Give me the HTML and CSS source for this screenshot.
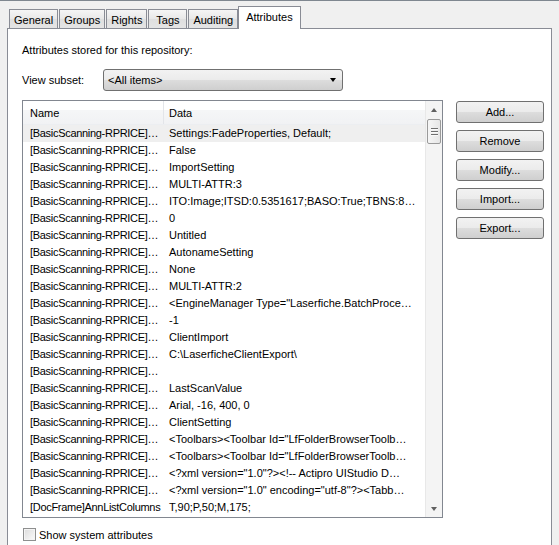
FILE: index.html
```html
<!DOCTYPE html>
<html lang="en">
<head>
    <meta charset="UTF-8">
    <title>Repository Properties - Attributes</title>
    <link rel="stylesheet" href="styles.css">
</head>
<body>
    <div class="dialog">
        <div class="tabs">
            <div class="tab">General</div>
            <div class="tab">Groups</div>
            <div class="tab">Rights</div>
            <div class="tab tab-tags">Tags</div>
            <div class="tab">Auditing</div>
            <div class="tab selected">Attributes</div>
        </div>
        <div class="panel">
            <div class="intro">Attributes stored for this repository:</div>
            <div class="subset-row">
                <span class="subset-label">View subset:</span>
                <div class="combo">
                    <span>&lt;All items&gt;</span>
                    <span class="combo-arrow"></span>
                </div>
            </div>
            <div class="main-row">
                <div class="listbox">
                    <div class="list-main">
                        <div class="list-header">
                            <div class="col-name">Name</div>
                            <div class="col-data">Data</div>
                        </div>
                        <div class="row selected-row"><div class="col-name">[BasicScanning-RPRICE]…</div><div class="col-data">Settings:FadeProperties, Default;</div></div>
                        <div class="row"><div class="col-name">[BasicScanning-RPRICE]…</div><div class="col-data">False</div></div>
                        <div class="row"><div class="col-name">[BasicScanning-RPRICE]…</div><div class="col-data">ImportSetting</div></div>
                        <div class="row"><div class="col-name">[BasicScanning-RPRICE]…</div><div class="col-data">MULTI-ATTR:3</div></div>
                        <div class="row"><div class="col-name">[BasicScanning-RPRICE]…</div><div class="col-data">ITO:Image;ITSD:0.5351617;BASO:True;TBNS:8…</div></div>
                        <div class="row"><div class="col-name">[BasicScanning-RPRICE]…</div><div class="col-data">0</div></div>
                        <div class="row"><div class="col-name">[BasicScanning-RPRICE]…</div><div class="col-data">Untitled</div></div>
                        <div class="row"><div class="col-name">[BasicScanning-RPRICE]…</div><div class="col-data">AutonameSetting</div></div>
                        <div class="row"><div class="col-name">[BasicScanning-RPRICE]…</div><div class="col-data">None</div></div>
                        <div class="row"><div class="col-name">[BasicScanning-RPRICE]…</div><div class="col-data">MULTI-ATTR:2</div></div>
                        <div class="row"><div class="col-name">[BasicScanning-RPRICE]…</div><div class="col-data">&lt;EngineManager Type="Laserfiche.BatchProce…</div></div>
                        <div class="row"><div class="col-name">[BasicScanning-RPRICE]…</div><div class="col-data">-1</div></div>
                        <div class="row"><div class="col-name">[BasicScanning-RPRICE]…</div><div class="col-data">ClientImport</div></div>
                        <div class="row"><div class="col-name">[BasicScanning-RPRICE]…</div><div class="col-data">C:\LaserficheClientExport\</div></div>
                        <div class="row"><div class="col-name">[BasicScanning-RPRICE]…</div><div class="col-data"></div></div>
                        <div class="row"><div class="col-name">[BasicScanning-RPRICE]…</div><div class="col-data">LastScanValue</div></div>
                        <div class="row"><div class="col-name">[BasicScanning-RPRICE]…</div><div class="col-data">Arial, -16, 400, 0</div></div>
                        <div class="row"><div class="col-name">[BasicScanning-RPRICE]…</div><div class="col-data">ClientSetting</div></div>
                        <div class="row"><div class="col-name">[BasicScanning-RPRICE]…</div><div class="col-data">&lt;Toolbars&gt;&lt;Toolbar Id="LfFolderBrowserToolb…</div></div>
                        <div class="row"><div class="col-name">[BasicScanning-RPRICE]…</div><div class="col-data">&lt;Toolbars&gt;&lt;Toolbar Id="LfFolderBrowserToolb…</div></div>
                        <div class="row"><div class="col-name">[BasicScanning-RPRICE]…</div><div class="col-data">&lt;?xml version="1.0"?&gt;&lt;!--  Actipro UIStudio D…</div></div>
                        <div class="row"><div class="col-name">[BasicScanning-RPRICE]…</div><div class="col-data">&lt;?xml version="1.0" encoding="utf-8"?&gt;&lt;Tabb…</div></div>
                        <div class="row"><div class="col-name">[DocFrame]AnnListColumns</div><div class="col-data">T,90;P,50;M,175;</div></div>
                    </div>
                    <div class="scrollbar">
                        <div class="scroll-btn"><span class="arrow-up"></span></div>
                        <div class="thumb">
                            <span class="grip"></span>
                            <span class="grip"></span>
                            <span class="grip"></span>
                        </div>
                        <div class="scroll-track"></div>
                        <div class="scroll-btn"><span class="arrow-down"></span></div>
                    </div>
                </div>
                <div class="buttons">
                    <div class="button">Add...</div>
                    <div class="button">Remove</div>
                    <div class="button">Modify...</div>
                    <div class="button">Import...</div>
                    <div class="button">Export...</div>
                </div>
            </div>
            <div class="check-row">
                <span class="checkbox"></span>
                <span>Show system attributes</span>
            </div>
        </div>
    </div>
</body>
</html>
```

FILE: styles.css
```css
body {
    margin: 0;
    background-color: #f0f0f0;
    font-family: "Liberation Sans", Arial, sans-serif;
    font-size: 11px;
    color: #000;
}
.dialog {
    width: 559px;
    height: 544px;
    overflow: hidden;
    border-top: 1px solid #7f8790;
}
.tabs {
    display: flex;
    align-items: flex-end;
    height: 22px;
    margin-top: 5px;
    padding-left: 9px;
}
.tab {
    height: 18px;
    line-height: 21px;
    padding: 0 4px;
    margin-right: 1px;
    border: 1px solid #898c95;
    border-bottom: none;
    background: linear-gradient(#f5f5f5, #e8e8e8 50%, #dfdfdf 51%, #e4e4e4);
    text-align: center;
}
.tab-tags {
    min-width: 29px;
}
.tab.selected {
    position: relative;
    z-index: 1;
    height: 22px;
    line-height: 20px;
    padding: 0 7px;
    margin-bottom: -1px;
    margin-left: -1px;
    background: #fff;
}
.panel {
    margin-left: 7px;
    height: 540px;
    padding: 14px 0 0 14px;
    box-sizing: border-box;
    width: 545px;
    background: #fff;
    border: 1px solid #898c95;
}
.intro {
    line-height: 13px;
    margin-top: 1px;
}
.subset-row {
    display: flex;
    align-items: center;
    margin-top: 12px;
}
.subset-label {
    width: 81px;
}
.combo {
    display: flex;
    align-items: center;
    justify-content: space-between;
    width: 240px;
    height: 22px;
    box-sizing: border-box;
    padding: 0 6px 0 4px;
    border: 1px solid #707070;
    border-radius: 3px;
    background: linear-gradient(#f2f2f2, #ebebeb 50%, #dddddd 51%, #cfcfcf);
}
.combo-arrow {
    width: 0;
    height: 0;
    border-left: 3.5px solid transparent;
    border-right: 3.5px solid transparent;
    border-top: 4px solid #000;
}
.main-row {
    display: flex;
    margin-top: 9px;
}
.listbox {
    display: flex;
    width: 421px;
    height: 418px;
    box-sizing: border-box;
    border: 1px solid #828790;
}
.list-main {
    flex: 1;
    overflow: hidden;
}
.list-header {
    display: flex;
    height: 24px;
    line-height: 24px;
    background: linear-gradient(#ffffff 40%, #f5f6f7 41%, #f1f2f4);
    border-bottom: 1px solid #eceef1;
    box-sizing: border-box;
}
.list-header .col-name {
    border-right: 1px solid #e3e5e9;
    width: 133px;
    letter-spacing: 0;
}
.list-header .col-data {
    padding-left: 5px;
}
.row {
    display: flex;
    height: 17px;
    line-height: 17px;
    white-space: nowrap;
}
.selected-row {
    background-color: #efefef;
}
.col-name {
    width: 139px;
    padding-left: 7px;
    flex-shrink: 0;
    letter-spacing: -0.3px;
}
.scrollbar {
    display: flex;
    flex-direction: column;
    width: 17px;
    background: #f4f4f4;
    border-left: 1px solid #e8e8e8;
    box-sizing: border-box;
}
.scroll-btn {
    height: 17px;
    display: flex;
    align-items: center;
    justify-content: center;
}
.arrow-up {
    border-left: 3.5px solid transparent;
    border-right: 3.5px solid transparent;
    border-bottom: 4px solid #606060;
}
.arrow-down {
    border-left: 3.5px solid transparent;
    border-right: 3.5px solid transparent;
    border-top: 4px solid #606060;
}
.thumb {
    display: flex;
    flex-direction: column;
    align-items: center;
    justify-content: center;
    gap: 1px;
    height: 25px;
    margin: 1px 1px 0;
    border: 1px solid #9a9a9a;
    border-radius: 2px;
    background: linear-gradient(90deg, #f6f6f6, #e6e6e6);
    box-sizing: border-box;
}
.grip {
    width: 7px;
    height: 1px;
    background: #6f6f6f;
    border-bottom: 1px solid #fafafa;
}
.scroll-track {
    flex: 1;
}
.buttons {
    display: flex;
    flex-direction: column;
    gap: 7px;
    margin-left: 13px;
    padding-top: 1px;
}
.button {
    width: 88px;
    height: 22px;
    line-height: 20px;
    box-sizing: border-box;
    text-align: center;
    border: 1px solid #707070;
    border-radius: 3px;
    background: linear-gradient(#f2f2f2, #ebebeb 50%, #dddddd 51%, #cfcfcf);
}
.check-row {
    display: flex;
    align-items: center;
    gap: 3px;
    margin-top: 10px;
    margin-left: 1px;
}
.checkbox {
    width: 13px;
    height: 13px;
    box-sizing: border-box;
    border: 1px solid #8e8f8f;
    background: linear-gradient(135deg, #dcdcdc, #fbfbfb);
    box-shadow: inset 0 0 0 1px #f4f4f4;
}
```
